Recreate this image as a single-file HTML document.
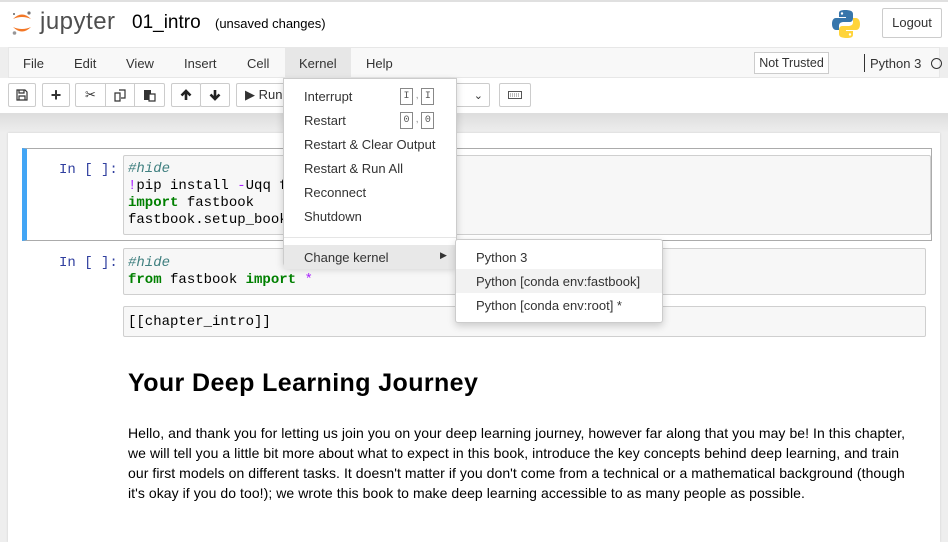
<!DOCTYPE html>
<html><head><meta charset="utf-8"><style>
*{box-sizing:border-box;margin:0;padding:0}
body{width:948px;height:542px;overflow:hidden;background:#eee;font-family:"Liberation Sans",Arial,sans-serif;color:#000;position:relative}
.abs{position:absolute}
#hdr{left:0;top:0;width:948px;height:47px;background:#fff;border-top:2px solid #e0e0e0}
#mb{left:8px;top:47px;width:932px;height:31px;background:#f8f8f8;border:1px solid #e7e7e7}
.mi{position:absolute;top:8px;font-size:13px;color:#333}
#tb{left:0;top:78px;width:948px;height:35px;background:#fff}
.btn{position:absolute;top:5px;height:24px;border:1px solid #ccc;border-radius:2px;background:#fff;font-size:13px;color:#333;display:flex;align-items:center;justify-content:center}
#shade{left:0;top:113px;width:948px;height:20px;background:linear-gradient(#ddd,#eee)}
#page{left:8px;top:133px;width:932px;height:409px;background:#fff;box-shadow:0 0 2px #ccc}
.mono{font-family:"Liberation Mono",monospace;font-size:14px;line-height:17px}
.prompt{color:#303f9f}
.inp{background:#f7f7f7;border:1px solid #cfcfcf;border-radius:2px}
.k{color:#008000;font-weight:bold}
.c{color:#408080;font-style:italic}
.o{color:#aa22ff}
.dd{background:#fff;border:1px solid #ccc;box-shadow:0 3px 8px rgba(0,0,0,.18);border-radius:0 0 3px 3px}
.it{position:absolute;font-size:13px;color:#333}
.kb{display:inline-block;border:1px solid #888;font-family:"Liberation Mono",monospace;font-size:10px;width:13px;height:17px;text-align:center;line-height:16px;color:#555}
</style></head><body>
<div id="hdr" class="abs">
 <svg class="abs" style="left:11px;top:7px" width="22" height="28" viewBox="0 0 22 28">
  <path d="M2 10 Q11 1 20 10 Q11 6 2 10Z" fill="#f37726"/>
  <path d="M2 18 Q11 27 20 18 Q11 22 2 18Z" fill="#f37726"/>
  <circle cx="18" cy="4" r="1.6" fill="#767677"/><circle cx="3.5" cy="24" r="1.8" fill="#989798"/><circle cx="3" cy="5" r="1" fill="#616262"/>
 </svg>
 <div class="abs" style="left:40px;top:6px;font-size:24px;color:#4e4e4e;letter-spacing:0.5px">jupyter</div>
 <div class="abs" style="left:132px;top:10px;font-size:19px">01_intro</div>
 <div class="abs" style="left:215px;top:14px;font-size:13px">(unsaved changes)</div>
 <svg class="abs" style="left:832px;top:7px" width="28" height="30" viewBox="0 0 28 30">
  <path d="M13 1 C7 1 7 3 7 5 V8 H14 V9 H4 C1 9 0 12 0 15 C0 19 2 21 4 21 H7 V17 C7 14 9 13 12 13 H18 C20 13 21 11 21 9 V5 C21 2 18 1 13 1Z" fill="#3776ab"/>
  <path d="M15 29 C21 29 21 27 21 25 V22 H14 V21 H24 C27 21 28 18 28 15 C28 11 26 9 24 9 H21 V13 C21 16 19 17 16 17 H10 C8 17 7 19 7 21 V25 C7 28 10 29 15 29Z" fill="#ffd43b"/>
  <circle cx="10" cy="4.5" r="1.2" fill="#fff"/><circle cx="18" cy="25.5" r="1.2" fill="#fff"/>
 </svg>
 <div class="abs" style="left:882px;top:6px;width:60px;height:30px;border:1px solid #ccc;border-radius:2px;font-size:13px;color:#333;text-align:center;line-height:28px">Logout</div>
</div>
<div id="mb" class="abs">
 <div class="mi" style="left:14px">File</div>
 <div class="mi" style="left:65px">Edit</div>
 <div class="mi" style="left:117px">View</div>
 <div class="mi" style="left:175px">Insert</div>
 <div class="mi" style="left:238px">Cell</div>
 <div class="abs" style="left:276px;top:-1px;width:66px;height:31px;background:#e7e7e7"></div>
 <div class="mi" style="left:290px">Kernel</div>
 <div class="mi" style="left:357px">Help</div>
 <div class="abs" style="left:745px;top:4px;width:75px;height:22px;border:1px solid #ccc;background:#fff;font-size:12.5px;color:#333;text-align:center;line-height:20px">Not Trusted</div>
 <div class="abs" style="left:855px;top:6px;width:1px;height:18px;background:#333"></div>
 <div class="mi" style="left:861px">Python 3</div>
 <div class="abs" style="left:922px;top:10px;width:11px;height:11px;border:1.5px solid #333;border-radius:50%"></div>
</div>
<div id="tb" class="abs">
 <div class="btn" style="left:8px;width:28px"><svg width="12" height="12" viewBox="0 0 12 12"><path d="M1 1H9L11 3V11H1Z M3 1V4H8V1 M3 11V7H9V11" fill="none" stroke="#333" stroke-width="1.2"/></svg></div>
 <div class="btn" style="left:42px;width:28px;font-weight:bold;font-size:18px">+</div>
 <div class="btn" style="left:75px;width:31px;border-radius:2px 0 0 2px">✂</div>
 <div class="btn" style="left:105px;width:30px;border-radius:0"><svg width="13" height="13" viewBox="0 0 13 13"><path d="M1 4H6V12H1Z M5 1H11V9H7" fill="none" stroke="#333" stroke-width="1.2"/></svg></div>
 <div class="btn" style="left:134px;width:31px;border-radius:0 2px 2px 0"><svg width="13" height="13" viewBox="0 0 13 13"><path d="M1 1H8V11H1Z" fill="#333"/><path d="M6 5H12V12H6Z" fill="#fff" stroke="#333" stroke-width="1.2"/></svg></div>
 <div class="btn" style="left:171px;width:30px"><svg width="12" height="12" viewBox="0 0 12 12"><path d="M6 11V2M1.5 6.5L6 2L10.5 6.5" fill="none" stroke="#222" stroke-width="2.6"/></svg></div>
 <div class="btn" style="left:200px;width:30px"><svg width="12" height="12" viewBox="0 0 12 12"><path d="M6 1V10M1.5 5.5L6 10L10.5 5.5" fill="none" stroke="#222" stroke-width="2.6"/></svg></div>
 <div class="btn" style="left:236px;width:60px;justify-content:flex-start;padding-left:8px">▶&nbsp;Run</div>
 <div class="btn" style="left:440px;width:50px;justify-content:flex-end;padding-right:6px;font-size:11px">⌄</div>
 <div class="btn" style="left:499px;width:32px"><svg width="14" height="8"><rect x=".5" y=".5" width="13" height="7" fill="none" stroke="#555"/><path d="M2 3H12M2 5H12" stroke="#777" stroke-dasharray="1 1"/></svg></div>
</div>
<div id="shade" class="abs"></div>
<div id="page" class="abs"></div>
<div class="abs" style="left:22px;top:148px;width:910px;height:93px;border:1px solid #ababab;border-left:5px solid #42a5f5"></div>
<div class="abs mono prompt" style="left:59px;top:162px">In [ ]:</div>
<div class="abs inp mono" style="left:123px;top:155px;width:808px;height:80px;padding:5px 4px"><span class="c">#hide</span><br><span class="o">!</span>pip install <span class="o">-</span>Uqq fastbook<br><span class="k">import</span> fastbook<br>fastbook.setup_book()</div>
<div class="abs mono prompt" style="left:59px;top:255px">In [ ]:</div>
<div class="abs inp mono" style="left:123px;top:248px;width:803px;height:47px;padding:6px 4px"><span class="c">#hide</span><br><span class="k">from</span> fastbook <span class="k">import</span> <span class="o">*</span></div>
<div class="abs inp mono" style="left:123px;top:306px;width:803px;height:31px;padding:7px 4px">[[chapter_intro]]</div>
<div class="abs" style="left:128px;top:369px;font-size:25px;font-weight:bold;letter-spacing:0.4px">Your Deep Learning Journey</div>
<div class="abs" style="left:128px;top:423px;font-size:14px;line-height:20px;white-space:nowrap;letter-spacing:0.06px">Hello, and thank you for letting us join you on your deep learning journey, however far along that you may be! In this chapter,<br>we will tell you a little bit more about what to expect in this book, introduce the key concepts behind deep learning, and train<br>our first models on different tasks. It doesn't matter if you don't come from a technical or a mathematical background (though<br>it's okay if you do too!); we wrote this book to make deep learning accessible to as many people as possible.</div>
<div class="abs dd" style="left:283px;top:78px;width:174px;height:188px">
 <div class="it" style="left:20px;top:10px">Interrupt</div>
 <div class="abs" style="left:116px;top:9px;font-size:10px;color:#888"><span class="kb">I</span> , <span class="kb">I</span></div>
 <div class="it" style="left:20px;top:34px">Restart</div>
 <div class="abs" style="left:116px;top:33px;font-size:10px;color:#888"><span class="kb">0</span> , <span class="kb">0</span></div>
 <div class="it" style="left:20px;top:58px">Restart &amp; Clear Output</div>
 <div class="it" style="left:20px;top:82px">Restart &amp; Run All</div>
 <div class="it" style="left:20px;top:106px">Reconnect</div>
 <div class="it" style="left:20px;top:130px">Shutdown</div>
 <div class="abs" style="left:0;top:158px;width:172px;height:1px;background:#e5e5e5"></div>
 <div class="abs" style="left:0;top:166px;width:172px;height:24px;background:#e8e8e8"></div>
 <div class="it" style="left:20px;top:171px">Change kernel</div>
 <div class="abs" style="left:156px;top:171px;font-size:9px;color:#333">▶</div>
</div>
<div class="abs dd" style="left:455px;top:239px;width:208px;height:84px;border-radius:3px">
 <div class="it" style="left:20px;top:10px">Python 3</div>
 <div class="abs" style="left:0;top:29px;width:206px;height:24px;background:#f2f2f2"></div>
 <div class="it" style="left:20px;top:34px">Python [conda env:fastbook]</div>
 <div class="it" style="left:20px;top:58px">Python [conda env:root] *</div>
</div>
</body></html>
